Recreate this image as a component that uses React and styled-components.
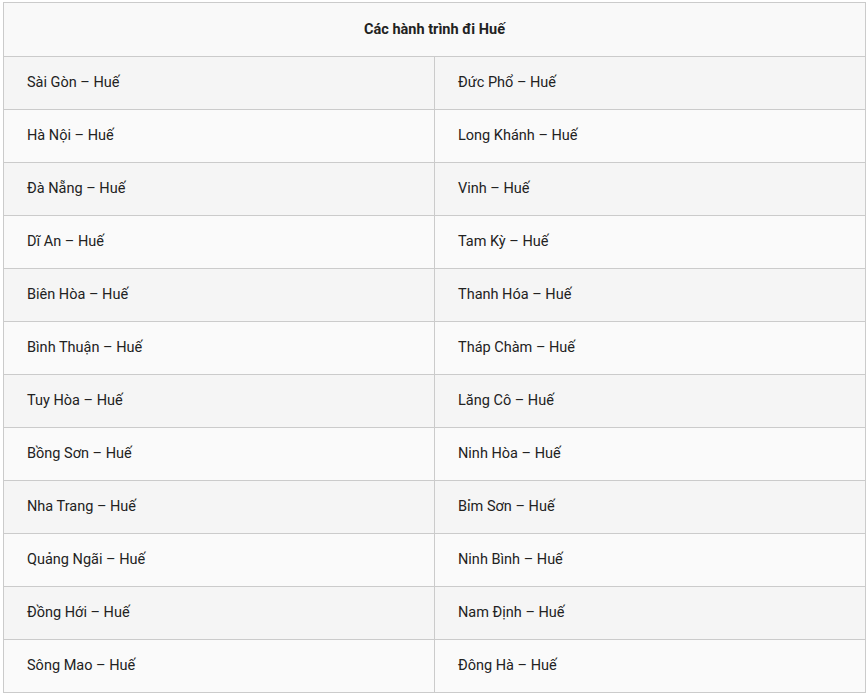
import React from "react";
import styled, { createGlobalStyle } from "styled-components";

const Global = createGlobalStyle`
  html, body { margin: 0; padding: 0; background: #fff; }
  body { font-family: Roboto, "Noto Sans", Arial, sans-serif; }
`;

const Wrap = styled.div`
  padding: 2px 0 0 3px;
  width: 863px;
`;

const Table = styled.table`
  width: 863px;
  border-collapse: collapse;
  table-layout: fixed;
  font-size: 14.5px;
  line-height: 1.2;
  color: #222;
`;

const HeadCell = styled.th`
  height: 53px;
  padding: 0;
  border: 1px solid #cbcbcb;
  background: #f9f9f9;
  font-weight: 700;
  text-align: center;
  vertical-align: middle;
`;

const Row = styled.tr`
  background: ${(p) => (p.$odd ? "#f5f5f5" : "#fafafa")};
`;

const Cell = styled.td`
  height: 52px;
  padding: 0 0 0 23px;
  border: 1px solid #cbcbcb;
  vertical-align: middle;
  text-align: left;
`;

const rows = [
  ["Sài Gòn – Huế", "Đức Phổ – Huế"],
  ["Hà Nội – Huế", "Long Khánh – Huế"],
  ["Đà Nẵng – Huế", "Vinh – Huế"],
  ["Dĩ An – Huế", "Tam Kỳ – Huế"],
  ["Biên Hòa – Huế", "Thanh Hóa – Huế"],
  ["Bình Thuận – Huế", "Tháp Chàm – Huế"],
  ["Tuy Hòa – Huế", "Lăng Cô – Huế"],
  ["Bồng Sơn – Huế", "Ninh Hòa – Huế"],
  ["Nha Trang – Huế", "Bỉm Sơn – Huế"],
  ["Quảng Ngãi – Huế", "Ninh Bình – Huế"],
  ["Đồng Hới – Huế", "Nam Định – Huế"],
  ["Sông Mao – Huế", "Đông Hà – Huế"],
];

export default function App() {
  return (
    <Wrap>
      <Global />
      <Table>
        <thead>
          <tr>
            <HeadCell colSpan={2}>Các hành trình đi Huế</HeadCell>
          </tr>
        </thead>
        <tbody>
          {rows.map((r, i) => (
            <Row key={i} $odd={i % 2 === 0}>
              <Cell>{r[0]}</Cell>
              <Cell>{r[1]}</Cell>
            </Row>
          ))}
        </tbody>
      </Table>
    </Wrap>
  );
}
